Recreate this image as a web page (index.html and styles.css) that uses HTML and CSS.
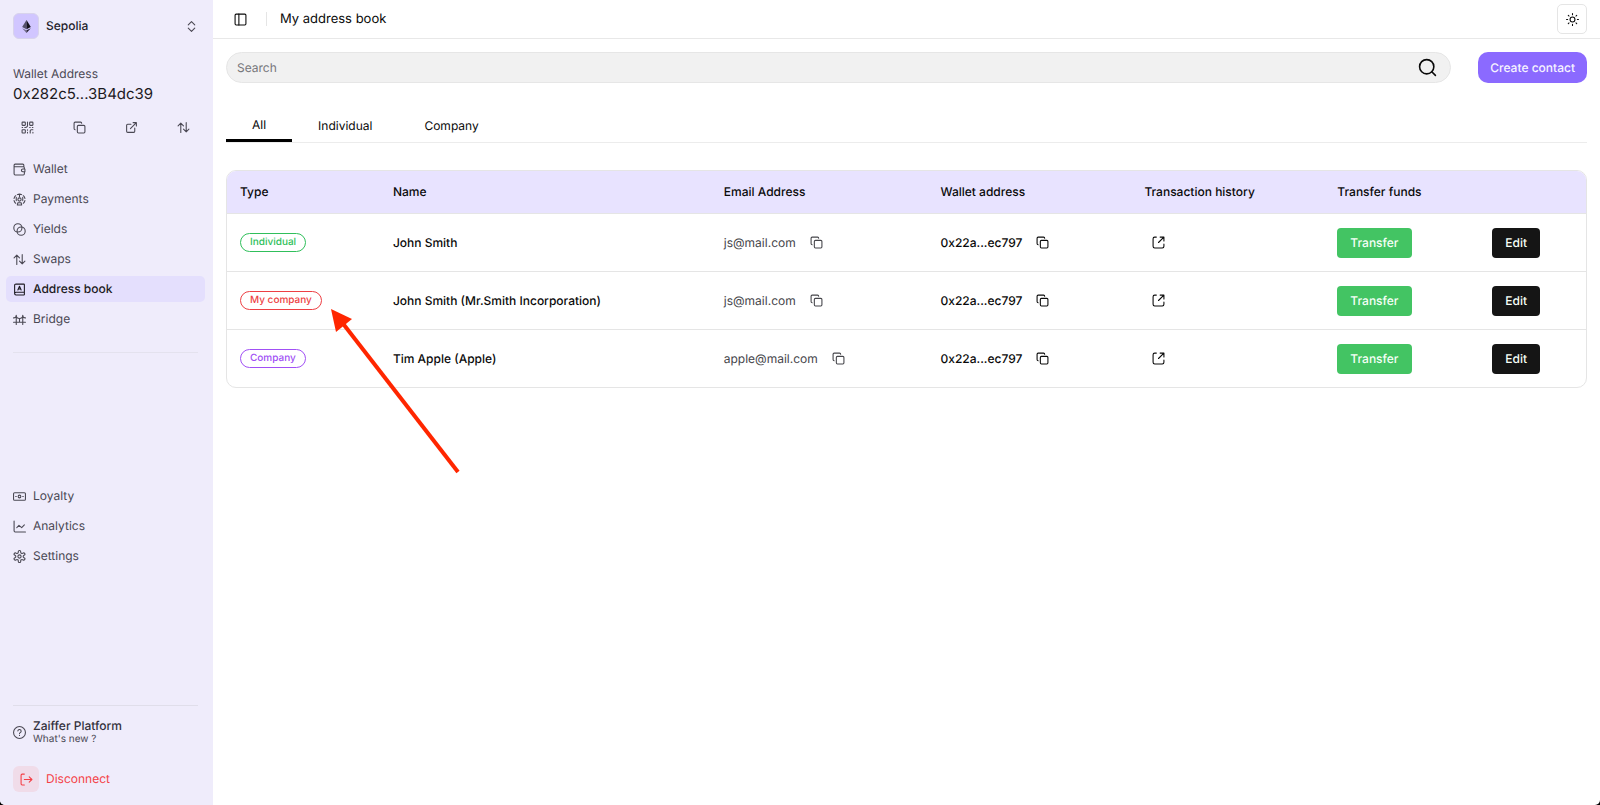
FILE: index.html
```html
<!DOCTYPE html>
<html lang="en">
<head>
<meta charset="utf-8">
<title>My address book</title>
<link rel="stylesheet" href="styles.css">
</head>
<body>
<svg class="sprite" aria-hidden="true">
  <symbol id="copy" viewBox="0 0 24 24"><rect x="8" y="8" width="14" height="14" rx="2"/><path d="M4 16c-1.100 0-2-.9-2-2V4c0-1.100.9-2 2-2h10c1.100 0 2 .9 2 2"/></symbol>
  <symbol id="link" viewBox="0 0 24 24"><path d="M15 3h6v6M10 14 21 3M18 13v6a2 2 0 0 1-2 2H5a2 2 0 0 1-2-2V8a2 2 0 0 1 2-2h6"/></symbol>
  <symbol id="open" viewBox="0 0 24 24"><path d="M8 2H5a3 3 0 0 0-3 3v14a3 3 0 0 0 3 3h14a3 3 0 0 0 3-3v-4M15 2h7v7M12 12l9-9"/></symbol>
  <symbol id="swap" viewBox="0 0 24 24"><path d="M7 21V4M2 9l5-5 5 5M17 3v17M22 15l-5 5-5-5"/></symbol>
</svg>
<div class="app">
  <aside class="sidebar">
    <button class="network" type="button">
      <span class="network-logo"><svg viewBox="0 0 16 24"><path fill="#55516a" d="M8 0 0 13l8 4z"/><path fill="#15131c" d="M8 0l8 13-8 4z"/><path fill="#77718f" d="M0 15l8 9v-5z"/><path fill="#2a2735" d="M16 15l-8 9v-5z"/></svg></span>
      <span class="network-name">Sepolia</span>
      <svg class="icon" viewBox="0 0 24 24"><path d="m6 9 6-6 6 6M6 15l6 6 6-6"/></svg>
    </button>
    <section class="account">
      <span class="account-label">Wallet Address</span>
      <span class="account-value">0x282c5...3B4dc39</span>
      <div class="account-actions">
        <button type="button" aria-label="QR code"><svg class="icon" viewBox="0 0 24 24"><rect x="2" y="2" width="6" height="6" rx="1"/><rect x="16" y="2" width="6" height="6" rx="1"/><rect x="2" y="16" width="6" height="6" rx="1"/><path d="M22 16h-3a2 2 0 0 0-2 2v4M22 21v1M12 2v5a4 4 0 0 1-4 5H7M2 12h1M12 16v1M12 21v1M16 12h1M21 12h1"/></svg></button>
        <button type="button" aria-label="Copy address"><svg class="icon"><use href="#copy"/></svg></button>
        <button type="button" aria-label="Open in explorer"><svg class="icon"><use href="#link"/></svg></button>
        <button type="button" aria-label="Swap"><svg class="icon"><use href="#swap"/></svg></button>
      </div>
    </section>
    <nav class="nav">
      <a href="#wallet"><svg class="icon" viewBox="0 0 24 24"><path d="M20 7V4a2 2 0 0 0-2-2H4a2 2 0 0 0-2 2v16a2 2 0 0 0 2 2h15a2 2 0 0 0 2-2v-3M2 5a2 2 0 0 0 2 2h15a2 2 0 0 1 2 2v2M22 11h-4a2.500 2.500 0 0 0 0 5h4z"/></svg>Wallet</a>
      <a href="#payments"><svg class="icon" viewBox="0 0 24 24"><path d="M5 19a10 10 0 0 1-3-5M2 10a10 10 0 0 1 3-5M8 3a10 10 0 0 1 8 0M19 5a10 10 0 0 1 3 5M22 14a10 10 0 0 1-3 5M12 2v5M6 8v6M18 8v6M8 22l1-4h6l1 4z"/><circle cx="12" cy="12" r="3"/></svg>Payments</a>
      <a href="#yields"><svg class="icon" viewBox="0 0 24 24"><circle cx="9" cy="9" r="7.500"/><circle cx="15" cy="15" r="7.500"/></svg>Yields</a>
      <a href="#swaps"><svg class="icon"><use href="#swap"/></svg>Swaps</a>
      <a class="active" href="#address-book" aria-current="page"><svg class="icon" viewBox="0 0 24 24"><path d="M3 19.500v-15A2.500 2.500 0 0 1 5.500 2H20a1 1 0 0 1 1 1v18a1 1 0 0 1-1 1H5.500a2.500 2.500 0 0 1 0-5H21M9 13l3-7 3 7M10 11h4"/></svg>Address book</a>
      <a href="#bridge"><svg class="icon" viewBox="0 0 24 24"><path d="M6 4v17M18 4v17M1 17h22M1 9c3 0 5-2 5-5 0 4 3 6 6 6s6-2 6-6c0 3 2 5 5 5M12 10v7"/></svg>Bridge</a>
    </nav>
    <nav class="nav nav-secondary">
      <a href="#loyalty"><svg class="icon" viewBox="0 0 24 24"><rect x="1" y="5" width="22" height="14" rx="2"/><circle cx="12" cy="12" r="2.500"/><path d="M5 12h1M18 12h1"/></svg>Loyalty</a>
      <a href="#analytics"><svg class="icon" viewBox="0 0 24 24"><path d="M2 2v18a2 2 0 0 0 2 2h19M7 14l4-4 5 4 5-5"/></svg>Analytics</a>
      <a href="#settings"><svg class="icon" viewBox="0 0 24 24"><path d="M12.220 1h-.44a2 2 0 0 0-2 2v1.180a2 2 0 0 1-1 1.730l-.43.25a2 2 0 0 1-2 0l-1.150-.58a2 2 0 0 0-2.730.73l-.22.38a2 2 0 0 0 .73 2.730l1.150.6a2 2 0 0 1 1 1.720v.51a2 2 0 0 1-1 1.740l-1.150.59a2 2 0 0 0-.73 2.730l.22.38a2 2 0 0 0 2.730.73l1.150-.58a2 2 0 0 1 2 0l.43.25a2 2 0 0 1 1 1.730V21a2 2 0 0 0 2 2h.44a2 2 0 0 0 2-2v-1.180a2 2 0 0 1 1-1.730l.43-.25a2 2 0 0 1 2 0l1.150.58a2 2 0 0 0 2.730-.73l.22-.39a2 2 0 0 0-.73-2.730l-1.150-.58a2 2 0 0 1-1-1.740v-.5a2 2 0 0 1 1-1.740l1.150-.59a2 2 0 0 0 .73-2.730l-.22-.38a2 2 0 0 0-2.730-.73l-1.150.58a2 2 0 0 1-2 0l-.43-.25a2 2 0 0 1-1-1.730V3a2 2 0 0 0-2-2z"/><circle cx="12" cy="12" r="3"/></svg>Settings</a>
    </nav>
    <footer class="sidebar-footer">
      <a class="platform" href="#news">
        <svg class="icon" viewBox="0 0 24 24"><circle cx="12" cy="12" r="11"/><path d="M9 9a3 3 0 0 1 6 1c0 2-3 2.500-3 4M12 17v.5"/></svg>
        <span class="platform-text"><strong>Zaiffer Platform</strong><small>What's new ?</small></span>
      </a>
      <button class="disconnect" type="button">
        <span class="disconnect-icon"><svg class="icon" viewBox="0 0 24 24"><path d="M8 2H4a2 2 0 0 0-2 2v16a2 2 0 0 0 2 2h4M17 7l5 5-5 5M22 12H8"/></svg></span>
        Disconnect
      </button>
    </footer>
  </aside>
  <main class="main">
    <header class="topbar">
      <button class="toggle" type="button" aria-label="Toggle sidebar"><svg class="icon" viewBox="0 0 24 24"><rect x="2" y="2" width="20" height="20" rx="2"/><path d="M9 2v20"/></svg></button>
      <h1>My address book</h1>
      <button class="theme" type="button" aria-label="Switch theme"><svg class="icon" viewBox="0 0 24 24"><circle cx="12" cy="12" r="4.500"/><path d="M12 1v2M12 21v2M4.200 4.200l1.400 1.400M18.400 18.400l1.400 1.400M1 12h2M21 12h2M4.200 19.800l1.400-1.400M18.400 5.600l1.400-1.400"/></svg></button>
    </header>
    <div class="content">
      <div class="tools">
        <form class="search" role="search">
          <input type="search" placeholder="Search" aria-label="Search">
          <button type="button" aria-label="Run search"><svg class="icon" viewBox="0 0 24 24"><circle cx="11" cy="11" r="9"/><path d="m22 22-4.600-4.600"/></svg></button>
        </form>
        <button class="create" type="button">Create contact</button>
      </div>
      <div class="tabs" role="tablist">
        <button class="selected" type="button" role="tab" aria-selected="true">All</button>
        <button type="button" role="tab" aria-selected="false">Individual</button>
        <button type="button" role="tab" aria-selected="false">Company</button>
      </div>
      <div class="table-card">
        <table>
          <colgroup><col class="c-type"><col class="c-name"><col class="c-email"><col class="c-wallet"><col class="c-history"><col class="c-transfer"><col class="c-edit"></colgroup>
          <thead>
            <tr><th scope="col">Type</th><th scope="col">Name</th><th scope="col">Email Address</th><th scope="col">Wallet address</th><th scope="col">Transaction history</th><th scope="col">Transfer funds</th><th></th></tr>
          </thead>
          <tbody>
            <tr>
              <td><span class="badge individual">Individual</span></td>
              <td>John Smith</td>
              <td><div class="copyable email">js@mail.com<button type="button" aria-label="Copy email"><svg class="icon"><use href="#copy"/></svg></button></div></td>
              <td><div class="copyable">0x22a...ec797<button type="button" aria-label="Copy wallet"><svg class="icon"><use href="#copy"/></svg></button></div></td>
              <td><a class="history" href="#history-1" aria-label="Transaction history"><svg class="icon"><use href="#open"/></svg></a></td>
              <td><button class="action transfer" type="button">Transfer</button></td>
              <td><button class="action edit" type="button">Edit</button></td>
            </tr>
            <tr>
              <td><span class="badge mine">My company</span></td>
              <td>John Smith (Mr.Smith Incorporation)</td>
              <td><div class="copyable email">js@mail.com<button type="button" aria-label="Copy email"><svg class="icon"><use href="#copy"/></svg></button></div></td>
              <td><div class="copyable">0x22a...ec797<button type="button" aria-label="Copy wallet"><svg class="icon"><use href="#copy"/></svg></button></div></td>
              <td><a class="history" href="#history-2" aria-label="Transaction history"><svg class="icon"><use href="#open"/></svg></a></td>
              <td><button class="action transfer" type="button">Transfer</button></td>
              <td><button class="action edit" type="button">Edit</button></td>
            </tr>
            <tr>
              <td><span class="badge company">Company</span></td>
              <td>Tim Apple (Apple)</td>
              <td><div class="copyable email">apple@mail.com<button type="button" aria-label="Copy email"><svg class="icon"><use href="#copy"/></svg></button></div></td>
              <td><div class="copyable">0x22a...ec797<button type="button" aria-label="Copy wallet"><svg class="icon"><use href="#copy"/></svg></button></div></td>
              <td><a class="history" href="#history-3" aria-label="Transaction history"><svg class="icon"><use href="#open"/></svg></a></td>
              <td><button class="action transfer" type="button">Transfer</button></td>
              <td><button class="action edit" type="button">Edit</button></td>
            </tr>
          </tbody>
        </table>
        <svg class="pointer" viewBox="0 0 130 166" aria-hidden="true"><path d="M10 12 127 163" stroke="#ff2600" stroke-width="4"/><path d="M0 0 21 10 5 23z" fill="#ff2600"/></svg>
      </div>
    </div>
  </main>
</div>
</body>
</html>
```

FILE: styles.css
```css
* { box-sizing: border-box; }

body {
  margin: 0;
  background: #000;
  color: #0a0a0a;
  font: 400 12px/16px Inter, sans-serif;
  text-rendering: geometricPrecision;
}

button, input {
  margin: 0;
  padding: 0;
  border: 0;
  background: none;
  color: inherit;
  font: inherit;
  text-rendering: inherit;
}

a { color: inherit; text-decoration: none; }

.sprite { display: none; }

.icon {
  display: block;
  flex: none;
  width: 13px;
  height: 13px;
  fill: none;
  stroke: currentColor;
  stroke-width: 2;
  stroke-linecap: round;
  stroke-linejoin: round;
}

.app {
  display: flex;
  min-height: 100vh;
  overflow: hidden;
  border-radius: 0 0 5px 5px;
  background: #fff;
}

/* Sidebar */
.sidebar {
  display: flex;
  flex: none;
  flex-direction: column;
  width: 213px;
  padding: 13px 8px 13px 6px;
  background: #efecfb;
  color: #4a4853;
}

.network {
  display: flex;
  align-items: center;
  gap: 7px;
  padding: 0 7px;
  text-align: left;
}

.network-logo, .disconnect-icon {
  display: grid;
  place-items: center;
  width: 26px;
  height: 26px;
  border-radius: 6px;
}

.network-logo { border: 1px solid #d8d3ec; background: #d1c6ff; }
.network-logo svg { width: 9px; height: 13px; }
.network-name { flex: 1; color: #24222b; font-weight: 500; }

.account {
  display: flex;
  flex-direction: column;
  padding: 27px 7px 0;
}

.account-value {
  margin-top: 2px;
  color: #1c1a22;
  font-size: 15px;
  line-height: 20px;
}

.account-actions {
  display: flex;
  justify-content: space-between;
  padding: 17px 8px 0;
}

.nav {
  display: flex;
  flex-direction: column;
  gap: 4px;
  margin-top: 22px;
}

.nav a {
  display: flex;
  align-items: center;
  gap: 7px;
  height: 26px;
  padding: 0 7px;
  border-radius: 5px;
}

.nav .active { background: #e4dffd; color: #1c1a22; font-weight: 500; }

.nav::after {
  height: 1px;
  margin: 16px 7px 0;
  background: #e4e2ee;
  content: "";
}

.nav-secondary { margin: auto 0; padding-bottom: 6px; }
.nav-secondary::after { content: none; }

.sidebar-footer { display: flex; flex-direction: column; }

.platform {
  display: flex;
  align-items: center;
  gap: 7px;
  margin: 0 7px;
  padding: 12px 0 20px;
  border-top: 1px solid #e0deea;
}

.platform-text { display: flex; flex-direction: column; }
.platform strong { color: #33313b; font-weight: 500; line-height: 15px; }
.platform small { font-size: 10px; line-height: 13px; }

.disconnect {
  display: flex;
  align-items: center;
  gap: 7px;
  padding: 0 7px;
  color: #f43f46;
}

.disconnect-icon { background: #f0dce9; }

/* Page */
.main { flex: 1; min-width: 0; }

.topbar {
  display: flex;
  align-items: center;
  height: 39px;
  padding: 0 13px 0 21px;
  border-bottom: 1px solid #e8e8e8;
}

.topbar h1 {
  flex: 1;
  margin: 0 0 0 19px;
  padding-left: 13px;
  border-left: 1px solid #e5e5e5;
  font-size: 13px;
  font-weight: 400;
  line-height: 14px;
}

.theme {
  display: grid;
  place-items: center;
  width: 30px;
  height: 30px;
  border: 1px solid #e5e5e5;
  border-radius: 5px;
}

.content { padding: 13px; }
.tools { display: flex; gap: 27px; }

.search {
  display: flex;
  flex: 1;
  align-items: center;
  height: 31px;
  padding: 0 13px 0 10px;
  border: 1px solid #e6e6e6;
  border-radius: 16px;
  background: #f1f1f1;
}

.search input { flex: 1; outline: 0; }
.search input::placeholder { color: #77777b; opacity: 1; }
.search .icon { width: 19px; height: 19px; }

.create {
  padding: 0 12px;
  border-radius: 10px;
  background: #8b6aff;
  color: #f7f4ff;
  font-weight: 500;
}

.tabs {
  display: flex;
  height: 33px;
  margin-top: 27px;
  border-bottom: 1px solid #ececec;
}

.tabs button { padding: 0 26px; }

.tabs .selected { border-bottom: 3px solid #000; }

.table-card {
  position: relative;
  margin-top: 27px;
  border: 1px solid #e5e5e5;
  border-radius: 10px;
}

table {
  width: 100%;
  border-spacing: 0;
  table-layout: fixed;
  font-weight: 500;
}

.c-type { width: 11.25%; }
.c-name { width: 24.35%; }
.c-email { width: 15.95%; }
.c-wallet { width: 15%; }
.c-history { width: 14.2%; }
.c-transfer { width: 11.4%; }
.c-edit { width: 7.85%; }

th, td {
  padding: 0 13px;
  border-bottom: 1px solid #e5e5e5;
  text-align: left;
}

th {
  height: 43px;
  background: #e8e3ff;
  font-weight: 500;
}

td { height: 58px; }

th:first-child { border-top-left-radius: 9px; }
th:last-child { border-top-right-radius: 9px; }
tbody tr:last-child td { height: 57px; border-bottom: 0; }

.badge {
  display: inline-block;
  padding: 0 9px;
  border: 1px solid;
  border-radius: 10px;
  font-size: 10px;
  line-height: 17px;
}

.individual { color: #30bf5b; }
.mine { color: #ed3f44; }
.company { color: #a150f5; }

.copyable { display: flex; align-items: center; gap: 14px; }
.email { color: #45454a; font-weight: 400; }
.history { display: block; padding-left: 8px; }

.action {
  display: block;
  height: 30px;
  padding: 0 13px;
  border-radius: 4px;
  color: #f5fff7;
}

.transfer { background: #43c463; }
.edit { background: #151515; }

.pointer {
  position: absolute;
  top: 138px;
  left: 104px;
  width: 130px;
  height: 166px;
}
```
